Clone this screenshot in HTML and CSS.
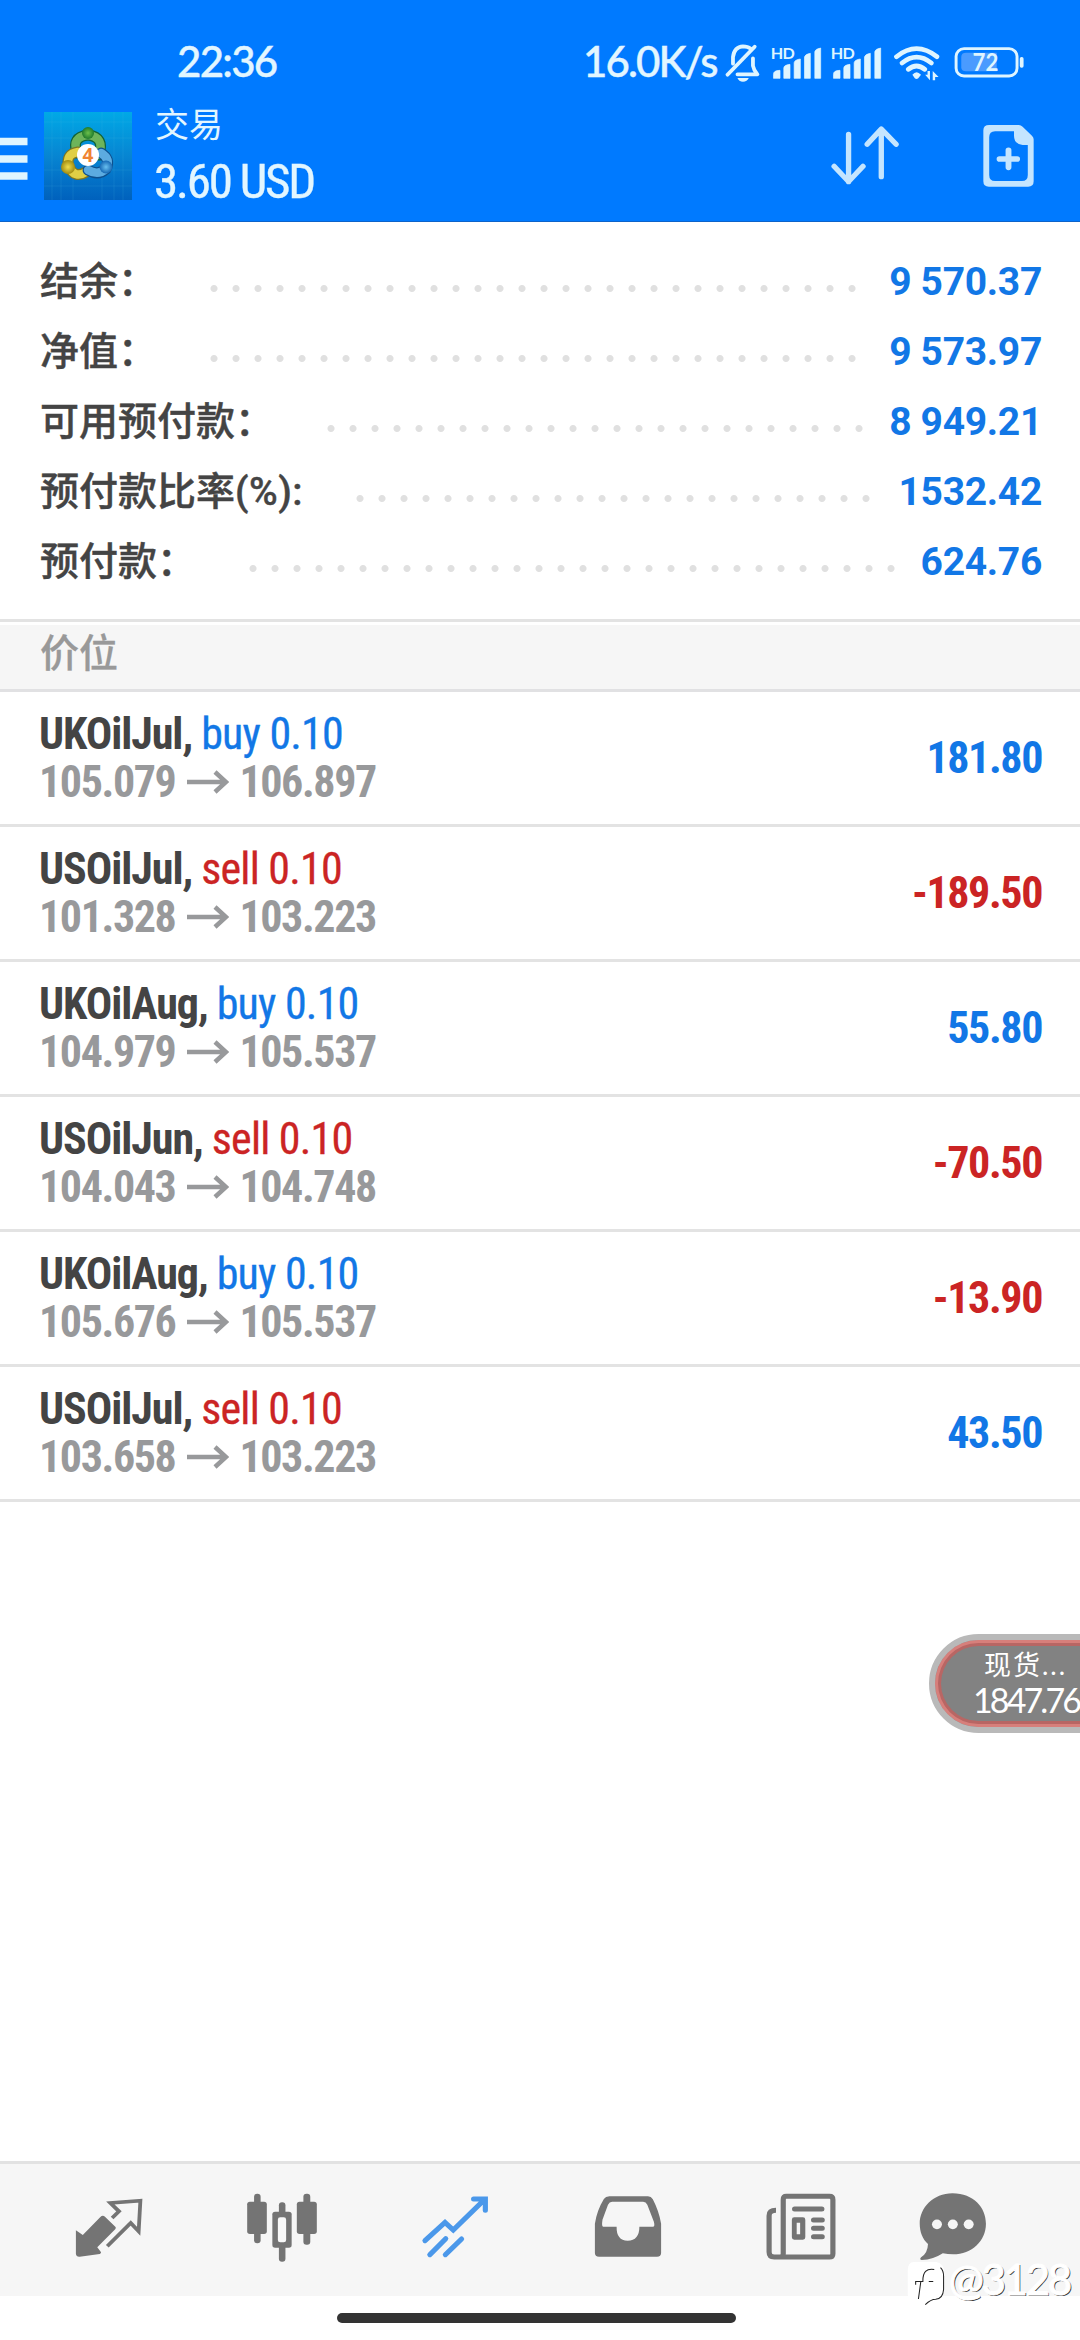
FILE: index.html
```html
<!DOCTYPE html>
<html lang="zh-CN">
<head>
<meta charset="utf-8">
<title>交易</title>
<link rel="stylesheet" href="styles.css">
</head>
<body>
<header class="header">
  <div class="status">
    <span class="clock">22:36</span>
    <span class="speed">16.0K/s</span>
    <svg class="bell" viewBox="530 125 115 125" preserveAspectRatio="none"><g fill="none" stroke="#dff5ff" stroke-width="11" stroke-linecap="round" stroke-linejoin="round"><path d="M543 223 622 139"/><path d="M559 190V170Q563 139 588 138Q602 138 610 145M617 174V196Q619 209 630 222H572"/></g><path d="M572 233H605Q600 244 588 244T572 233Z" fill="#dff5ff"/></svg>
    <svg class="signal" viewBox="665 125 155 125" preserveAspectRatio="none"><text class="hd" x="670" y="175" textLength="70">HD</text><path d="M678 234V222Q678 210 697 210V234ZM708 234V203Q708 194 726 192V234ZM738 234V187Q740 178 756 176V234ZM768 234V170Q769 162 785 159V234ZM798 234V154Q799 146 815 143V234Z" fill="#dff5ff" stroke="#dff5ff" stroke-width="2" stroke-linejoin="round"/></svg>
    <svg class="signal" viewBox="665 125 155 125" preserveAspectRatio="none"><text class="hd" x="670" y="175" textLength="70">HD</text><path d="M678 234V222Q678 210 697 210V234ZM708 234V203Q708 194 726 192V234ZM738 234V187Q740 178 756 176V234ZM768 234V170Q769 162 785 159V234ZM798 234V154Q799 146 815 143V234Z" fill="#dff5ff" stroke="#dff5ff" stroke-width="2" stroke-linejoin="round"/></svg>
    <svg class="wifi" viewBox="1020 125 145 125" preserveAspectRatio="none"><g fill="none" stroke="#dff5ff" stroke-width="14" stroke-linecap="round"><path d="M1036 169Q1094 121 1153 169"/><path d="M1052 188Q1094 153 1137 188"/><path d="M1070 207Q1094 187 1118 207"/></g><path d="M1082 223Q1094 208 1107 223L1099 234Q1094 238 1089 234Z" fill="#dff5ff"/><path d="M1133 212V240L1119 223H1126V212ZM1141 240V212L1158 230H1148V240Z" fill="#dff5ff"/></svg>
    <svg class="battery" viewBox="1200 125 210 125" preserveAspectRatio="none"><path d="M1238 157H1327V213H1238Q1224 213 1224 201V170Q1224 157 1238 157Z" fill="#4a9bff"/><rect x="1209" y="145" width="177" height="82" rx="23" fill="none" stroke="#dff5ff" stroke-width="8.500"/><rect x="1394" y="170" width="11" height="32" rx="5" fill="#dff5ff"/><text class="level" x="1257" y="213" textLength="75" lengthAdjust="spacingAndGlyphs">72</text></svg>
  </div>
  <div class="toolbar">
    <svg class="menu" viewBox="0 0 28 44"><path d="M0 4.500H27.500M0 22H27.500M0 39H27.500" stroke="#dff5ff" stroke-width="7.500"/></svg>
    <svg class="logo" viewBox="0 0 88 88">
      <defs>
        <linearGradient id="sky" x2="0" y2="1"><stop stop-color="#00a9e6"/><stop offset=".5" stop-color="#0785d2"/><stop offset="1" stop-color="#0061bd"/></linearGradient>
        <radialGradient id="gn"><stop stop-color="#6cc04b"/><stop offset="1" stop-color="#1f7a2c"/></radialGradient>
        <radialGradient id="ye"><stop stop-color="#f0de4e"/><stop offset="1" stop-color="#a08b12"/></radialGradient>
        <radialGradient id="bl"><stop stop-color="#69c0f0"/><stop offset="1" stop-color="#1668b4"/></radialGradient>
      </defs>
      <rect width="88" height="88" fill="url(#sky)"/>
      <path d="M8 0V88M17 0V88M29 0V88M58 0V88M70 0V88M79 0V88M0 10H88M0 26H88M0 58H88M0 74H88" stroke="#55bce8" stroke-opacity=".15" stroke-width="1"/>
      <g fill="none" stroke-linecap="round">
        <path d="M33 41Q27 25 44 23Q61 25 55 43" stroke="#126236" stroke-width="11"/><path d="M33 41Q27 25 44 23Q61 25 55 43" stroke="#6db45a" stroke-width="8.500"/>
        <path d="M42 60Q31 67 25 55Q21 42 34 40" stroke="#7f7722" stroke-width="11"/><path d="M42 60Q31 67 25 55Q21 42 34 40" stroke="#e0cf45" stroke-width="8.500"/>
        <path d="M57 41Q67 47 62 57Q54 64 44 58" stroke="#0d508e" stroke-width="11"/><path d="M57 41Q67 47 62 57Q54 64 44 58" stroke="#5cabe0" stroke-width="8.500"/>
      </g>
      <circle cx="44" cy="21" r="6" fill="url(#gn)"/><circle cx="24" cy="55" r="7" fill="url(#ye)"/><circle cx="62" cy="55" r="6.500" fill="url(#bl)"/>
      <circle cx="44" cy="43" r="11" fill="#fff"/><text class="four" x="44" y="50" text-anchor="middle">4</text>
    </svg>
    <div class="title"><div class="page">交易</div><div class="total"><span>3.60 USD</span></div></div>
    <svg class="sort" viewBox="845 375 200 184" preserveAspectRatio="none"><path d="M896 403V545M854 499 896 545 938 499M991 530V387M950 433 991 387 1034 433" fill="none" stroke="#c4e5ff" stroke-width="15.500" stroke-linecap="round" stroke-linejoin="round"/></svg>
    <svg class="add" viewBox="1285 375 148 186" preserveAspectRatio="none"><path fill-rule="evenodd" d="M1303 375H1389Q1395 375 1400 380L1427 407Q1432 412 1432 418V544Q1432 560 1416 560H1302Q1286 560 1286 544V391Q1286 375 1303 375ZM1320 394Q1303 394 1303 412V525Q1303 543 1320 543H1398Q1415 543 1415 525V435H1400Q1375 432 1375 407V394Z" fill="#c4e5ff"/><path d="M1333 477H1384M1359 451V502" stroke="#c4e5ff" stroke-width="17" stroke-linecap="round"/></svg>
  </div>
</header>

<section class="summary">
  <div class="line"><span class="label">结余：</span><i class="dots" style="width:660px"></i><b class="value">9 570.37</b></div>
  <div class="line"><span class="label">净值：</span><i class="dots" style="width:660px"></i><b class="value">9 573.97</b></div>
  <div class="line"><span class="label">可用预付款：</span><i class="dots" style="width:550px"></i><b class="value">8 949.21</b></div>
  <div class="line"><span class="label">预付款比率<span class="pct">(%):</span></span><i class="dots" style="width:528px"></i><b class="value">1532.42</b></div>
  <div class="line"><span class="label">预付款：</span><i class="dots" style="width:660px"></i><b class="value">624.76</b></div>
</section>
<h2 class="group">价位</h2>

<main class="positions">
  <article class="position"><div><p class="deal"><b>UKOilJul,</b> <span class="buy">buy 0.10</span></p><p class="prices"><b>105.079</b><svg class="arrow" viewBox="0 0 42 24"><path d="M0 12H39M28 2 39 12 28 22"/></svg><b>106.897</b></p></div><strong class="buy">181.80</strong></article>
  <article class="position"><div><p class="deal"><b>USOilJul,</b> <span class="sell">sell 0.10</span></p><p class="prices"><b>101.328</b><svg class="arrow" viewBox="0 0 42 24"><path d="M0 12H39M28 2 39 12 28 22"/></svg><b>103.223</b></p></div><strong class="sell">-189.50</strong></article>
  <article class="position"><div><p class="deal"><b>UKOilAug,</b> <span class="buy">buy 0.10</span></p><p class="prices"><b>104.979</b><svg class="arrow" viewBox="0 0 42 24"><path d="M0 12H39M28 2 39 12 28 22"/></svg><b>105.537</b></p></div><strong class="buy">55.80</strong></article>
  <article class="position"><div><p class="deal"><b>USOilJun,</b> <span class="sell">sell 0.10</span></p><p class="prices"><b>104.043</b><svg class="arrow" viewBox="0 0 42 24"><path d="M0 12H39M28 2 39 12 28 22"/></svg><b>104.748</b></p></div><strong class="sell">-70.50</strong></article>
  <article class="position"><div><p class="deal"><b>UKOilAug,</b> <span class="buy">buy 0.10</span></p><p class="prices"><b>105.676</b><svg class="arrow" viewBox="0 0 42 24"><path d="M0 12H39M28 2 39 12 28 22"/></svg><b>105.537</b></p></div><strong class="sell">-13.90</strong></article>
  <article class="position"><div><p class="deal"><b>USOilJul,</b> <span class="sell">sell 0.10</span></p><p class="prices"><b>103.658</b><svg class="arrow" viewBox="0 0 42 24"><path d="M0 12H39M28 2 39 12 28 22"/></svg><b>103.223</b></p></div><strong class="buy">43.50</strong></article>
</main>

<nav class="tabs">
  <svg viewBox="213.500 160 203 210" preserveAspectRatio="none"><path d="M219 272 239 286 290 232Q297 225 304 232L334 262Q336 265 333 269L281 323 292 338Q292 342 288 343L230 351Q220 352 219 342Z" fill="#747474"/><path d="M324 235 344 215 319 190 406 183 401 275 378 250 310 320" fill="none" stroke="#747474" stroke-width="11"/></svg>
  <svg viewBox="714.500 160 203 210" preserveAspectRatio="none"><rect x="735" y="162" width="19" height="149" rx="9"/><rect x="715" y="186" width="57" height="97" rx="8"/><rect x="807" y="188" width="19" height="178" rx="9"/><rect x="788" y="216" width="56" height="108" rx="8"/><rect x="804" y="233" width="24" height="75" rx="7" fill="#f8f8f8"/><rect x="878" y="162" width="20" height="153" rx="9"/><rect x="859" y="186" width="58" height="97" rx="8"/></svg>
  <svg viewBox="1216.500 160 203 210" preserveAspectRatio="none"><path d="M1231 303 1289 248 1313 271 1403 180M1372 178H1406V212M1245 345 1291 297M1290 345 1337 298" fill="none" stroke="#4b98ea" stroke-width="15" stroke-linecap="round"/><path d="M1380 174H1411V205Z" fill="#4b98ea"/></svg>
  <svg viewBox="152.500 160 203 210" preserveAspectRatio="none"><path fill-rule="evenodd" d="M200 170H312Q321 170 326 179Q344 215 350 252V340Q350 351 338 351H170Q158 351 158 340V252Q164 212 184 178Q189 170 200 170ZM208 186Q200 186 196 195L180 240Q177 261 182 261H221Q220 302 253 303Q287 302 287 261H326Q333 261 329 246L310 195Q306 186 298 186Z"/></svg>
  <svg viewBox="656 160 203 210" preserveAspectRatio="none"><g fill="none" stroke="#747474" stroke-width="15"><path d="M685 212Q665 212 665 228V337Q665 352 680 352H840Q850 352 850 342V180Q850 170 840 170H715Q706 170 706 180V342Q706 352 695 352"/><path d="M739 208H818M794 241H819M794 266H819M794 291H819" stroke-linecap="round"/></g><path fill-rule="evenodd" d="M738 233H763Q770 233 770 240V293Q770 300 763 300H738Q731 300 731 293V240Q731 233 738 233ZM745 249V284H755V249Z"/></svg>
  <svg viewBox="1098 160 203 210" preserveAspectRatio="none"><path d="M1198 161C1260 161 1295 205 1295 252C1295 303 1254 344 1200 344Q1184 344 1170 341Q1142 360 1109 361Q1101 360 1107 353Q1126 341 1127 313C1111 298 1103 276 1103 252C1103 205 1142 161 1198 161Z"/><g fill="#f6f6f6"><circle cx="1153" cy="254" r="14.500"/><circle cx="1199" cy="254" r="14.500"/><circle cx="1245" cy="254" r="14.500"/></g></svg>
</nav>
<footer class="gesture"><div class="handle"></div></footer>

<aside class="ticker"><div class="ticker-name">现货...</div><div class="ticker-price">1847.76</div></aside>
<div class="mark">
  <svg class="mark-logo" viewBox="1062 360 116 140" preserveAspectRatio="none"><path d="M1085 366H1150Q1173 370 1173 400V452Q1169 477 1140 480L1118 496 1110 480Q1067 480 1067 462V392Q1067 366 1085 366Z" fill="#fff"/><path d="M1144 388Q1110 382 1111 424H1090V434M1105 424 1098 476M1128 424H1141M1162 383Q1171 392 1171 408V448Q1169 476 1148 477Q1134 477 1118 493" fill="none" stroke="#222" stroke-width="3"/></svg>
  <span>@3128</span>
</div>
</body>
</html>
```
FILE: styles.css
```css
* { box-sizing: border-box; margin: 0; padding: 0; }
body {
  width: 1080px; height: 2340px; overflow: hidden; position: relative;
  display: flex; flex-direction: column; background: #fff;
  font-family: Roboto, "Noto Sans CJK SC", sans-serif; color: #444;
}
svg { display: block; flex: none; }

.header { height: 222px; background: #007aff; border-bottom: 1px solid #0d63c9; color: #e2f6ff; }
.status { height: 100px; display: flex; align-items: flex-start; padding: 41.700px 0 0 177px; }
.clock, .speed { font: 500 42px/42px Lato, sans-serif; white-space: nowrap; margin-top: -1.500px; -webkit-text-stroke: .4px #e2f6ff; }
.clock { width: 406px; letter-spacing: -1.700px; }
.speed { width: 139.500px; letter-spacing: -1.900px; }
.bell { width: 39.600px; height: 41.700px; margin-right: 6.900px; }
.signal { width: 53.400px; height: 41.700px; margin-right: 6.500px; }
.wifi { width: 50px; height: 41.700px; margin: 0 12px 0 2.400px; }
.battery { width: 72.300px; height: 41.700px; }
.hd { font: 700 47px Lato, sans-serif; fill: #dff5ff; }
.level { font: 700 74px Lato, sans-serif; fill: #dff5ff; }

.toolbar { height: 121px; display: flex; align-items: flex-start; }
.menu { width: 28px; height: 44px; margin: 36.500px 16px 0 0; }
.logo { width: 88px; height: 88px; margin-top: 12px; }
.four { font: 700 19px "Open Sans", sans-serif; fill: #f08432; }
.title { flex: 1; padding-left: 22px; }
.page { font-size: 34px; line-height: 50px; height: 48px; padding-left: 1px; }
.total { font-size: 49px; line-height: 56px; font-stretch: 75%; white-space: nowrap; padding-top: 6px; letter-spacing: -2.200px; -webkit-text-stroke: .4px #e2f6ff; }
.sort { width: 68.900px; height: 61.300px; margin: 25px 82.500px 0 0; }
.add { width: 51px; height: 62px; margin: 25px 46.500px 0 0; }

.summary { height: 400px; padding: 24px 38px 0 40px; border-bottom: 3px solid #e3e3e3; }
.line { height: 70px; display: flex; align-items: center; }
.label { height: 70px; font-size: 39px; line-height: 65px; font-weight: 500; white-space: nowrap; margin-right: 46px; font-family: "Noto Sans CJK SC", sans-serif; -webkit-text-stroke: .4px #444; }
.pct { font-family: Roboto, sans-serif; letter-spacing: .500px; }
.dots { height: 7px; margin-top: 15px; background: radial-gradient(circle at 11px 3.500px, #e0e0e0 3px, transparent 4px) 0 0 / 22px 7px repeat-x; }
.value { flex: 1; text-align: right; font-size: 39px; color: #1277e6; white-space: nowrap; letter-spacing: -.300px; padding-top: 1px; }

.group { height: 67px; margin-top: 3px; padding-left: 40px; background: #f6f6f6; border-bottom: 3px solid #e1e1e3; font: 500 39px/51px "Noto Sans CJK SC", sans-serif; color: #999; -webkit-text-stroke: .3px #999; }

.positions { flex: 1; }
.position { height: 135px; border-bottom: 3px solid #e3e3e3; padding: 18px 38px 0 40px; display: flex; justify-content: space-between; font-size: 44px; line-height: 48px; font-stretch: 75%; }
.position p { height: 48px; white-space: nowrap; }
.deal { letter-spacing: -1.050px; margin-left: -1px; }
.deal span { letter-spacing: -.800px; -webkit-text-stroke: .3px currentColor; }
.prices { display: flex; align-items: center; color: #98999b; letter-spacing: -1.400px; margin-left: -1px; }
.arrow { width: 42px; height: 24px; margin: 0 10px 0 12px; fill: none; stroke: #98999b; stroke-width: 4.500; }
.position strong { line-height: 97px; letter-spacing: -1.400px; }
.buy { color: #1277e6; }
.sell { color: #cb2424; }

.tabs { height: 135px; border-top: 3px solid #e2e2e2; background: #f6f6f6; padding-left: 22px; display: grid; grid-template-columns: repeat(5, 173px) 132px; justify-items: center; padding-top: 29px; }
.tabs svg { width: 70px; height: 70px; fill: #747474; }
.gesture { height: 44px; padding: 17px 0 0 337px; }
.handle { width: 399px; height: 10px; border-radius: 5px; background: #333; }

.ticker { position: absolute; left: 929px; top: 1634px; width: 200px; height: 99px; border-radius: 50px; background: #828282; border: 6px solid #b9b9b9; box-shadow: inset 0 0 0 3px #d77f7b, inset 0 0 0 6px #b86664; color: #fff; padding-left: 38px; }
.ticker-name { font: 27px/38px Lato, "Noto Sans CJK SC", sans-serif; padding: 6px 0 0 11px; letter-spacing: 2px; height: 40px; }
.ticker-price { font: 34px/40px Lato, sans-serif; letter-spacing: -2.900px; white-space: nowrap; }

.mark { position: absolute; left: 905.700px; top: 2260px; height: 47px; display: flex; align-items: center; }
.mark-logo { width: 40px; height: 47px; }
.mark span { font: 400 42px/38px Lato, sans-serif; height: 47px; color: #fff; -webkit-text-stroke: 1px #fff; text-shadow: 1.200px 1.200px 0 #333; margin-left: 3px; letter-spacing: -2.300px; }
```
